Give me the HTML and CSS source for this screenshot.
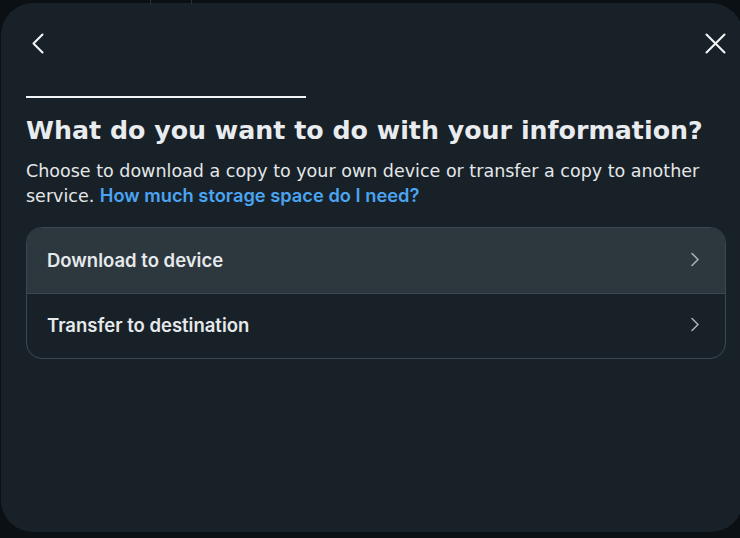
FILE: index.html
```html
<!DOCTYPE html>
<html>
<head>
<meta charset="utf-8">
<link rel="stylesheet" href="styles.css">
</head>
<body>
<div class="page">
  <div class="bg-line bg-line-a"></div>
  <div class="bg-line bg-line-b"></div>
  <div class="dialog">
    <div class="topbar">
      <button class="icon-btn" aria-label="Back">
        <svg width="24" height="24" viewBox="0 0 24 24"><path d="M15.5 2.5 L6.5 11.5 L15.5 20.5" fill="none" stroke="#f2f4f5" stroke-width="2.1" stroke-linecap="round" stroke-linejoin="round"/></svg>
      </button>
      <button class="icon-btn" aria-label="Close">
        <svg width="24" height="24" viewBox="0 0 24 24"><path d="M2.5 2.5 L20.5 20.5 M20.5 2.5 L2.5 20.5" fill="none" stroke="#f2f4f5" stroke-width="2.1" stroke-linecap="round"/></svg>
      </button>
    </div>
    <div class="progress"><div class="progress-fill"></div></div>
    <h1 class="title">What do you want to do with your information?</h1>
    <p class="desc">Choose to download a copy to your own device or transfer a copy to another service. <a class="link" href="#">How much storage space do I need?</a></p>
    <div class="options">
      <div class="option option-active">
        <span class="option-label">Download to device</span>
        <svg class="chev" width="12" height="16" viewBox="0 0 12 16"><path d="M3 1.5 L9 7.5 L3 13.5" fill="none" stroke="#a6b0b6" stroke-width="1.6" stroke-linecap="round" stroke-linejoin="round"/></svg>
      </div>
      <div class="option">
        <span class="option-label">Transfer to destination</span>
        <svg class="chev" width="12" height="16" viewBox="0 0 12 16"><path d="M3 1.5 L9 7.5 L3 13.5" fill="none" stroke="#a6b0b6" stroke-width="1.6" stroke-linecap="round" stroke-linejoin="round"/></svg>
      </div>
    </div>
  </div>
</div>
</body>
</html>
```
FILE: styles.css
```css
* { box-sizing: border-box; }
html, body { margin: 0; padding: 0; }
body {
  background: #0b1014;
  width: 740px;
  height: 538px;
  overflow: hidden;
  font-family: "DejaVu Sans", sans-serif;
}
.page {
  position: relative;
  width: 740px;
  height: 538px;
  padding: 3px 0 0 1px;
}
.bg-line {
  position: absolute;
  top: 0;
  width: 1px;
  height: 4px;
  background: #2a3136;
}
.bg-line-a { left: 150px; }
.bg-line-b { left: 191px; }
.dialog {
  width: 742px;
  height: 529px;
  background: #182127;
  border-radius: 32px;
  padding: 0 15px 0 25px;
  display: flex;
  flex-direction: column;
}
.topbar {
  display: flex;
  justify-content: space-between;
  align-items: center;
  padding-top: 27px;
  height: 54px;
}
.icon-btn {
  background: none;
  border: 0;
  padding: 0;
  width: 24px;
  height: 24px;
  display: flex;
  cursor: pointer;
}
.icon-btn:first-child { margin-left: 1px; }
.progress {
  margin-top: 39px;
  width: 700px;
  height: 2px;
}
.progress-fill {
  width: 280px;
  height: 2px;
  background: #f2f4f5;
}
.title {
  margin: 17px 0 0;
  font-size: 25.3px;
  font-weight: 700;
  color: #e9ecee;
  line-height: 32px;
  white-space: nowrap;
}
.desc {
  margin: 12px 0 0;
  width: 700px;
  font-size: 17.5px;
  line-height: 25px;
  color: #e4e7e9;
}
.link {
  font-family: Inter, sans-serif;
  font-size: 18.3px;
  line-height: 1;
  color: #4ba4f2;
  font-weight: 600;
  text-decoration: none;
}
.options {
  margin-top: 18px;
  width: 700px;
  border: 1px solid #3b4850;
  border-radius: 16px;
  overflow: hidden;
}
.option {
  height: 65px;
  display: flex;
  align-items: center;
  justify-content: space-between;
  padding: 0 24px 2px 20px;
  font-family: Inter, sans-serif;
  font-size: 18.5px;
  font-weight: 600;
  color: #e6e9eb;
}
.option + .option { border-top: 1px solid #3b4850; height: 65px; padding-bottom: 2px; }
.option-active { background: #2d383e; }
.chev { display: block; }
```
